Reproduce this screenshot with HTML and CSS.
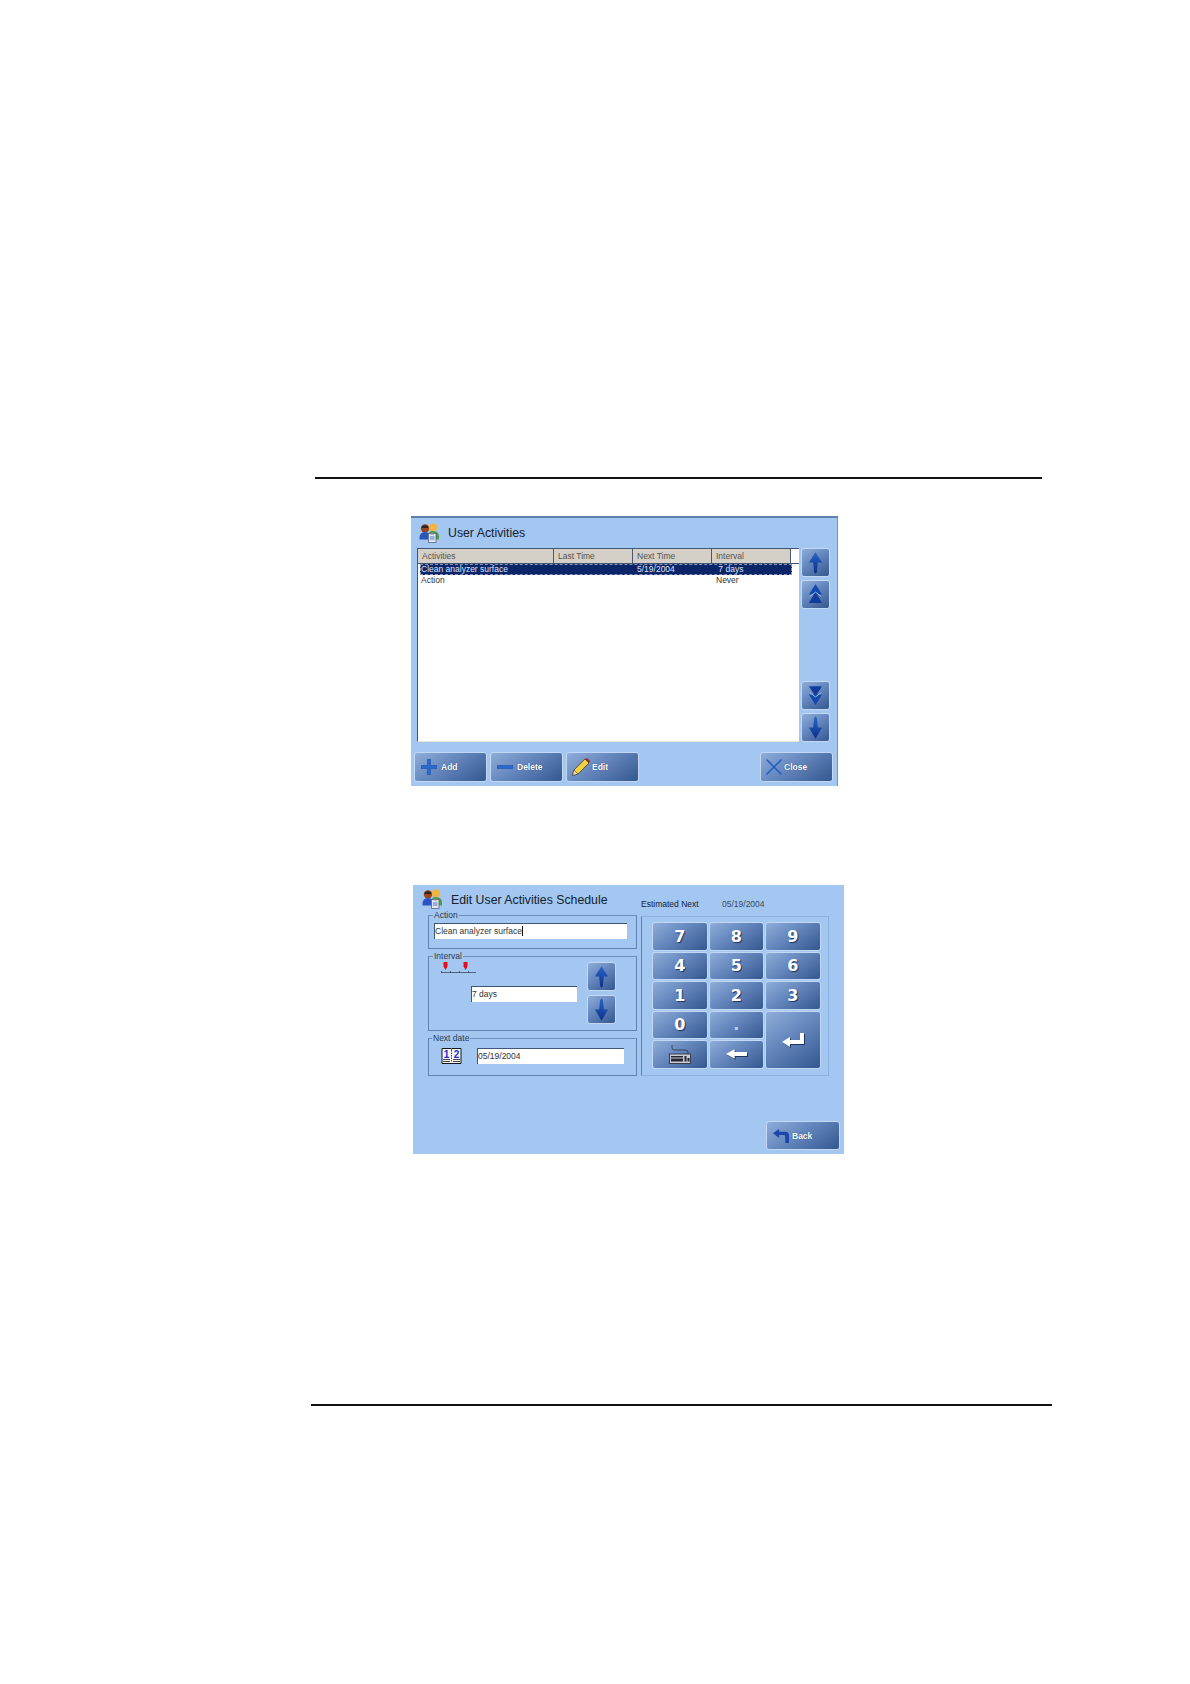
FILE: index.html
```html
<!DOCTYPE html>
<html lang="en">
<head>
  <meta charset="UTF-8" />
  <title>User Activities</title>
  <link rel="stylesheet" href="styles.css">
</head>
<body>
  <svg class="defs" width="0" height="0">
    <defs>
      <linearGradient id="blue" x1="0" y1="0" x2="0" y2="1">
        <stop offset="0" stop-color="#2a66c8"/>
        <stop offset="1" stop-color="#0b2f8c"/>
      </linearGradient>
      <symbol id="i-users" viewBox="0 0 20 20">
        <circle cx="5.500" cy="5.500" r="4.200" fill="#9a4420"/>
        <path d="M2 4 a4 3.500 0 0 1 7 0 v1 h-7z" fill="#2b2320"/>
        <path d="M0 15 q0 -6 5.500 -6 q3 0 4 2 v5.500 h-9.500z" fill="#2a55c0"/>
        <circle cx="13.500" cy="4.400" r="4.200" fill="#f2b440"/>
        <path d="M8.500 13 q0 -5 5 -5 q6 0 6 6 v2.500 h-11z" fill="#4e9a3c"/>
        <rect x="9" y="10.500" width="7.500" height="9" fill="#dfe6ee" stroke="#56687f" stroke-width="0.800"/>
        <rect x="11" y="9.500" width="3.500" height="2" fill="#7a8797"/>
        <path d="M10.500 14h4.500M10.500 16h4.500" stroke="#2a55c0" stroke-width="0.800"/>
      </symbol>
      <symbol id="i-up" viewBox="0 0 16 24">
        <path d="M8 1 L15 12 H10.500 L9.500 22 L8 24 L6.500 22 L5.500 12 H1z" fill="url(#blue)"/>
      </symbol>
      <symbol id="i-down" viewBox="0 0 16 24">
        <path d="M8 24 L15 12 H10.500 L9.500 2 L8 0 L6.500 2 L5.500 12 H1z" fill="url(#blue)"/>
      </symbol>
      <symbol id="i-page-up" viewBox="0 0 16 24">
        <path d="M8 1 L15 12 H1z" fill="#1448b0"/>
        <path d="M8 9 L15 21 H1z" fill="#123c9c"/>
        <path d="M2 14 L8 9.500 L14 14" fill="none" stroke="#a9c4e8" stroke-width="1"/>
      </symbol>
      <symbol id="i-page-down" viewBox="0 0 16 24">
        <path d="M8 13 L15 2 H1z" fill="#123c9c"/>
        <path d="M8 22 L15 11 H1z" fill="#1448b0"/>
        <path d="M2 9 L8 13.500 L14 9" fill="none" stroke="#a9c4e8" stroke-width="1"/>
      </symbol>
      <symbol id="i-plus" viewBox="0 0 16 16">
        <path d="M6.500 0h3v6.500h6.500v3h-6.500v6.500h-3v-6.500h-6.500v-3h6.500z" fill="#2a6ad0" stroke="#174a9e" stroke-width="0.500"/>
      </symbol>
      <symbol id="i-minus" viewBox="0 0 16 16">
        <rect x="0" y="6.500" width="16" height="3" fill="#2a6ad0" stroke="#174a9e" stroke-width="0.500"/>
      </symbol>
      <symbol id="i-pencil" viewBox="0 0 18 18">
        <path d="M0.500 17.500 L2 12 L13 1 L17 5 L6 16z" fill="#f2d23c" stroke="#3a3420" stroke-width="0.700"/>
        <path d="M0.500 17.500 L2 12 L6 16z" fill="#f0dcb0" stroke="#3a3420" stroke-width="0.500"/>
        <path d="M13 1 L15 0 L18 3 L17 5z" fill="#a02a24"/>
      </symbol>
      <symbol id="i-close" viewBox="0 0 16 16">
        <path d="M0.500 0.500 L15.500 15.500 M15.500 0.500 L0.500 15.500" stroke="#1f5cc4" stroke-width="1.500" fill="none"/>
      </symbol>
      <symbol id="i-back" viewBox="0 0 17 15">
        <path d="M0 4.500 L6.500 0 V3 H13 Q17 3 17 7 V15 H13 V8 Q13 6.500 11.500 6.500 H6.500 V9.500z" fill="#1c46a8"/>
      </symbol>
      <symbol id="i-enter" viewBox="0 0 22 14">
        <path d="M0 9 L8 4 V7 H18 V0 H22 V11 H8 V14z" fill="#fff"/>
      </symbol>
      <symbol id="i-left" viewBox="0 0 22 10">
        <path d="M0 5 L9 0 V3 H22 V7 H9 V10z" fill="#fff"/>
      </symbol>
      <symbol id="i-keyboard" viewBox="0 0 22 19">
        <path d="M3 0 V3 Q3 5 6 5 H16 Q19 5 19 7 V9" fill="none" stroke="#2c3340" stroke-width="0.800"/>
        <rect x="0.500" y="9" width="21" height="9.500" fill="#c9ccd0" stroke="#23272e" stroke-width="0.800"/>
        <path d="M2 11 h12 v1.500 h-12z M2 13.500 h12 v3 h-12z M15.500 11 h2 v5.500 h-2z M18.500 13 h2 v3.500 h-2z" fill="#23272e"/>
      </symbol>
      <symbol id="i-book" viewBox="0 0 21 16">
        <path d="M1 0.500 H10 L10.500 1.500 L11 0.500 H20 V15.500 H1z" fill="#f4f4f4" stroke="#15181c" stroke-width="1"/>
        <path d="M10.500 2 V14" stroke="#15181c" stroke-dasharray="1.500 1" stroke-width="0.800"/>
        <path d="M2 11.500 h7 M12 11.500 h7 M2 13.500 h7 M12 13.500 h7" stroke="#15181c" stroke-width="0.800"/>
        <text x="5.500" y="10" class="book-num">1</text>
        <text x="15.500" y="10" class="book-num">2</text>
      </symbol>
      <symbol id="i-ruler" viewBox="0 0 35 11">
        <path d="M2.500 0h4v4.500l-2 3.500-2-3.500z M22.500 0h4v4.500l-2 3.500-2-3.500z" fill="#e0101c"/>
        <path d="M0 10.500h35 M0.500 9v2 M9.500 9v2 M18.500 9v2 M27.500 9v2" stroke="#2c3a50" stroke-width="0.700" fill="none"/>
      </symbol>
    </defs>
  </svg>

  <div class="page">
    <div class="rule rule-top"></div>

    <div class="dialog activities">
      <div class="dialog-head">
        <svg class="user-icon"><use href="#i-users"/></svg>
        <div class="dialog-title">User Activities</div>
      </div>
      <div class="activities-body">
        <div class="list">
          <div class="list-head">
            <div>Activities</div>
            <div>Last Time</div>
            <div>Next Time</div>
            <div>Interval</div>
          </div>
          <div class="list-row selected">
            <div>Clean analyzer surface</div>
            <div></div>
            <div>5/19/2004</div>
            <div>&nbsp;7 days</div>
          </div>
          <div class="list-row">
            <div>Action</div>
            <div></div>
            <div></div>
            <div>Never</div>
          </div>
        </div>
        <div class="scroll-btns">
          <div class="btn square"><svg class="arrow"><use href="#i-up"/></svg></div>
          <div class="btn square"><svg class="arrow"><use href="#i-page-up"/></svg></div>
          <div class="scroll-space"></div>
          <div class="btn square"><svg class="arrow"><use href="#i-page-down"/></svg></div>
          <div class="btn square"><svg class="arrow"><use href="#i-down"/></svg></div>
        </div>
      </div>
      <div class="activities-foot">
        <div class="btn action"><svg class="icon"><use href="#i-plus"/></svg>Add</div>
        <div class="btn action"><svg class="icon"><use href="#i-minus"/></svg>Delete</div>
        <div class="btn action tight"><svg class="icon pencil"><use href="#i-pencil"/></svg>Edit</div>
        <div class="btn action push tight"><svg class="icon"><use href="#i-close"/></svg>Close</div>
      </div>
    </div>

    <div class="dialog schedule">
      <div class="schedule-head">
        <svg class="user-icon"><use href="#i-users"/></svg>
        <div class="dialog-title wide">Edit User Activities Schedule</div>
        <div class="estimated">Estimated Next</div>
        <div class="estimated-date">05/19/2004</div>
      </div>
      <div class="schedule-body">
        <div class="schedule-left">
          <fieldset class="group group-action">
            <legend>Action</legend>
            <div class="field"><span class="caret">Clean analyzer surface</span></div>
          </fieldset>
          <fieldset class="group group-interval">
            <legend>Interval</legend>
            <div class="interval-left">
              <svg class="ruler"><use href="#i-ruler"/></svg>
              <div class="field interval-field">7 days</div>
            </div>
            <div class="interval-btns">
              <div class="btn square"><svg class="arrow"><use href="#i-up"/></svg></div>
              <div class="btn square"><svg class="arrow"><use href="#i-down"/></svg></div>
            </div>
          </fieldset>
          <fieldset class="group group-date">
            <legend>Next date</legend>
            <svg class="book"><use href="#i-book"/></svg>
            <div class="field date-field">05/19/2004</div>
          </fieldset>
        </div>
        <div class="keypad">
          <div class="btn key">7</div>
          <div class="btn key">8</div>
          <div class="btn key">9</div>
          <div class="btn key">4</div>
          <div class="btn key">5</div>
          <div class="btn key">6</div>
          <div class="btn key">1</div>
          <div class="btn key">2</div>
          <div class="btn key">3</div>
          <div class="btn key">0</div>
          <div class="btn key dot">.</div>
          <div class="btn key enter"><svg class="enter-icon"><use href="#i-enter"/></svg></div>
          <div class="btn key"><svg class="keyboard"><use href="#i-keyboard"/></svg></div>
          <div class="btn key"><svg class="left-icon"><use href="#i-left"/></svg></div>
        </div>
      </div>
      <div class="schedule-foot">
        <div class="btn action back"><svg class="icon"><use href="#i-back"/></svg>Back</div>
      </div>
    </div>

    <div class="rule rule-bottom"></div>
  </div>
</body>
</html>
```

FILE: styles.css
```css
body {
  margin: 0;
  background-color: #fff;
  font-family: "Liberation Sans", Arial, sans-serif;
  font-size: 8.5px;
  color: #2c3440;
}
.defs {
  position: absolute;
}
.book-num {
  font-family: "Liberation Sans", Arial, sans-serif;
  font-size: 10px;
  font-weight: bold;
  fill: #1a2fd0;
  text-anchor: middle;
}
.page {
  height: 1684px;
  padding-top: 477px;
  box-sizing: border-box;
  overflow: hidden;
}
.rule {
  height: 2px;
  background-color: #111;
}
.rule-top {
  width: 727px;
  margin-left: 315px;
}
.rule-bottom {
  width: 741px;
  margin: 250px 0 0 311px;
}

/* dialogs */
.dialog {
  display: flex;
  flex-direction: column;
  box-sizing: border-box;
  background-color: #a3c7f1;
}
.activities {
  width: 427px;
  height: 270px;
  margin: 37px 0 0 411px;
  border-top: 2px solid #5d7fa9;
  border-right: 1px solid #7c90a8;
}
.schedule {
  width: 431px;
  height: 269px;
  margin: 99px 0 0 413px;
}
.dialog-head {
  display: flex;
  align-items: center;
  gap: 8px;
  height: 30px;
  padding-left: 8px;
  flex: none;
}
.user-icon {
  width: 21px;
  height: 20px;
  flex: none;
}
.dialog-title {
  font-size: 12.3px;
  color: #14202e;
}
.dialog-title.wide {
  width: 190px;
  font-size: 12.3px;
}

/* buttons */
.btn {
  display: flex;
  align-items: center;
  box-sizing: border-box;
  border: 1px solid #c2d8f3;
  border-radius: 3px;
  background: linear-gradient(145deg, #8fadd9 0%, #6486bd 45%, #35578f 100%);
  color: #fff;
}
.square {
  justify-content: center;
  width: 29px;
  height: 29px;
}
.arrow {
  width: 15px;
  height: 23px;
}
.action {
  width: 73px;
  height: 30px;
  padding-left: 6px;
  gap: 4px;
  font-weight: bold;
  text-shadow: 0 0 1px #1c3560;
}
.tight {
  padding-left: 5px;
  gap: 2px;
}
.icon {
  width: 16px;
  height: 16px;
  flex: none;
}
.pencil {
  width: 18px;
  height: 18px;
}
.push {
  margin-left: auto;
}

/* user activities list */
.activities-body {
  display: flex;
  gap: 2px;
  height: 194px;
  padding-left: 6px;
  flex: none;
}
.list {
  width: 382px;
  box-sizing: border-box;
  background-color: #fff;
  border-left: 1px solid #3d5877;
  border-top: 1px solid #3d5877;
  border-bottom: 1px solid #dfe8d8;
}
.list-head {
  display: grid;
  grid-template-columns: 136px 79px 79px 79px;
  height: 14px;
  line-height: 15px;
  border-bottom: 1px solid #3d5877;
  background: linear-gradient(to right, #d4d0c8 373px, #fff 373px);
  color: #55534e;
}
.list-head div {
  padding-left: 4px;
  border-right: 1px solid #4a5a6c;
}
.list-row {
  display: grid;
  grid-template-columns: 133px 79px 79px 79px;
  width: 372px;
  height: 11px;
  margin: 0 0 0 2px;
  line-height: 11px;
  color: #333;
}
.list-row div {
  padding-left: 5px;
}
.list-row div:first-child {
  padding-left: 1px;
}
.selected {
  box-sizing: border-box;
  background-color: #0c2468;
  outline: 1px dashed #8b95b5;
  outline-offset: -1px;
  color: #dde5f6;
}
.scroll-btns {
  display: flex;
  flex-direction: column;
  gap: 3px;
}
.scroll-space {
  flex: 1;
}
.activities-foot {
  display: flex;
  gap: 3px;
  margin-top: 10px;
  padding: 0 4px 0 3px;
}

/* edit schedule */
.schedule-head {
  display: flex;
  height: 25px;
  padding: 4px 0 0 9px;
  box-sizing: border-box;
  flex: none;
}
.schedule-head .dialog-title {
  margin-left: 8px;
  line-height: 22px;
}
.estimated {
  width: 81px;
  margin-top: 10px;
  color: #14202e;
}
.estimated-date {
  margin-top: 10px;
  color: #3a4a60;
}
.schedule-body {
  display: flex;
  gap: 4px;
  padding-left: 15px;
}
.schedule-left {
  display: flex;
  flex-direction: column;
  gap: 2px;
  width: 209px;
}
.group {
  display: flex;
  box-sizing: border-box;
  margin: 0;
  min-width: 0;
  border: 1px solid #5f83b0;
  border-top-color: #6b8fbb;
}
.group legend {
  margin-left: -8px;
  padding: 0 1px;
  height: 10px;
  line-height: 10px;
  color: #2c3a50;
}
.group-action {
  height: 39px;
  padding: 3px 9px 0 5px;
}
.group-action legend {
  margin-left: -1px;
}
.group-interval {
  height: 80px;
  padding: 1px 20px 0 12px;
}
.group-date {
  align-items: flex-start;
  gap: 15px;
  height: 43px;
  padding: 5px 12px 0 12px;
}
.group-date legend {
  margin-left: -9px;
}
.field {
  flex: 1;
  height: 16px;
  box-sizing: border-box;
  line-height: 15px;
  background-color: #fff;
  border-top: 1px solid #3d5877;
  border-left: 1px solid #3d5877;
  color: #333;
}
.caret {
  border-right: 1px solid #111;
}
.interval-left {
  flex: 1;
}
.ruler {
  display: block;
  width: 35px;
  height: 11px;
}
.interval-field {
  width: 106px;
  flex: none;
  margin: 13px 0 0 30px;
}
.interval-btns {
  display: flex;
  flex-direction: column;
  gap: 4px;
}
.book {
  width: 21px;
  height: 16px;
  flex: none;
}
.keypad {
  display: grid;
  grid-template-columns: repeat(3, 55.500px);
  grid-auto-rows: 28.500px;
  gap: 1px;
  width: 188px;
  height: 160px;
  margin-top: 6px;
  padding: 5px 0 0 10px;
  box-sizing: border-box;
  border: 1px solid #8fb2dc;
  border-left-color: #5f83b0;
}
.key {
  justify-content: center;
  font-family: "DejaVu Sans", Verdana, sans-serif;
  font-size: 16px;
  font-weight: bold;
  text-shadow: 1px 1px 1px #1c3560;
}
.dot {
  color: #b7d2f2;
  text-shadow: none;
}
.enter {
  grid-column: 3;
  grid-row: 4 / span 2;
}
.enter-icon {
  width: 22px;
  height: 14px;
  filter: drop-shadow(1px 1px 0 #1c3560);
}
.left-icon {
  width: 21px;
  height: 10px;
  filter: drop-shadow(1px 1px 0 #1c3560);
}
.keyboard {
  width: 22px;
  height: 19px;
}
.schedule-foot {
  display: flex;
  justify-content: flex-end;
  margin-top: auto;
  padding: 0 4px 4px 0;
}
.back {
  width: 74px;
  height: 29px;
  padding-left: 6px;
  gap: 3px;
}
```
